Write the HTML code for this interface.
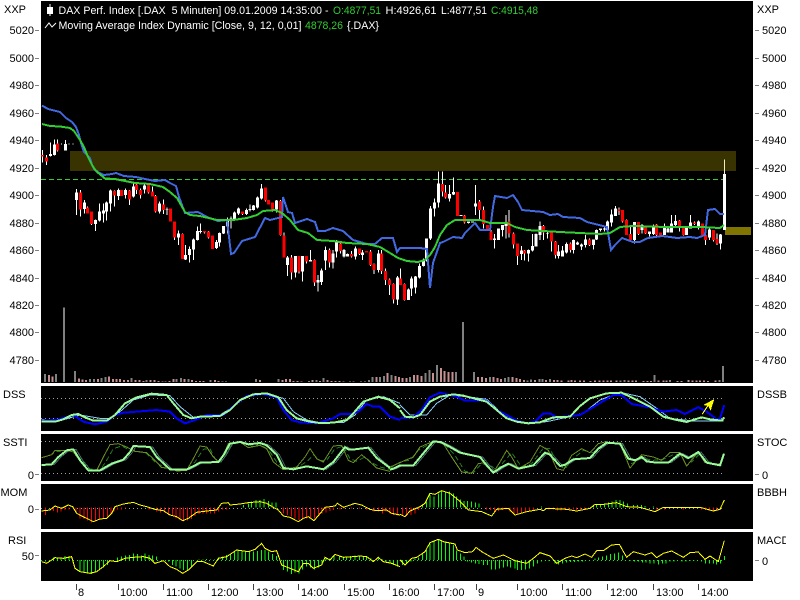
<!DOCTYPE html>
<html lang="en">
<head>
<meta charset="utf-8">
<title>DAX Chart</title>
<style>
html,body{margin:0;padding:0;background:#fff;width:800px;height:600px;overflow:hidden}
svg{display:block;font-family:"Liberation Sans",sans-serif;font-size:11px}
</style>
</head>
<body>
<svg width="800" height="600" viewBox="0 0 800 600" fill="none" shape-rendering="crispEdges">
<rect x="0" y="0" width="800" height="600" fill="#fff"/>
<!-- panes -->
<rect x="41" y="1" width="712" height="382" fill="#000"/>
<rect x="41" y="386" width="712" height="45" fill="#000"/>
<rect x="41" y="434" width="712" height="47" fill="#000"/>
<rect x="41" y="484" width="712" height="45" fill="#000"/>
<rect x="41" y="532" width="712" height="49" fill="#000"/>

<!-- zones -->
<rect x="70" y="151" width="666" height="20" fill="#383300"/>
<rect x="725" y="227" width="26" height="8" fill="#7f7500"/>
<path d="M41 179.5H724" stroke="#32cd32" stroke-dasharray="5 3"/>

<!-- candles: first group -->
<g transform="matrix(.33333 0 0 .33333 0 0)" stroke-width="3">
<path stroke="#fff" d="M128 450V488M139 465V495M151 428V470M163 418V467M172 418V455M184 430V433M196 420V452M205 432h3M218 432h3"/>
<path stroke="#fff" stroke-width="9" d="M151 462V468M163 433V465M196 432V452"/>
<path stroke="#f00" stroke-width="9" d="M128 465V470M139 472V485M172 430V452"/>
</g>
<!-- candles: left -->
<g transform="matrix(.33333 0 0 .33333 0 170)" stroke-width="3">
<path stroke="#fff" d="M229 57V135M241 60V140M253 90V130M263 110V130M274 125V165M286 148V183M298 100V155M310 100V157M320 95V152M332 58V125M344 62V110M355 55V90M365 60V78M376 55V85M388 60V105M400 35V83M410 42V72M422 55V85M433 40V70M445 43V70M458 50V80M466 75V128M478 95V130M490 88V132M501 112V135M512 115V155M524 155V210M536 182V225M547 190V265M557 225V270M568 230V278M580 205V270M592 170V212M602 160V190M614 183V190M625 183V205M637 197V237M649 210V237M659 187V230M670 168V192M682 143V190M693 140V175M704 125V150M715 112V135M728 124V135M739 115V135M750 103V125M761 105V122M773 80V115M785 42V88M796 52V95M806 90V103M818 97V125M830 90V128M841 90V197M852 187V263M863 258V318M875 255V328M886 258V322M897 258V310M907 258V335M920 258V280M932 240V275M943 268V348M954 315V365M965 295V345M976 230V300M988 235V292M999 240V295M1010 210V262M1021 215V250M1032 237V262M1043 250V260M1055 243V262M1066 230V268M1078 235V255M1088 240V270M1100 243V248M1111 240V288M1122 280V312M1135 240V307M1145 240V312M1157 295V345M1168 325V375M1180 340V400M1192 318V405"/>
<path stroke="#fff" stroke-width="9" d="M229 68V90M253 97V117M286 150V162M298 125V152M310 122V130M320 98V125M332 62V100M355 60V78M376 60V75M400 50V80M433 47V58M478 100V125M501 117V119M536 190V203M557 255V268M568 237V255M580 208V238M592 183V210M602 183V186M649 216V234M659 189V218M670 168V190M682 147V170M693 145V150M704 127V148M715 115V130M739 120V132M750 117V120M761 107V120M773 82V113M785 55V85M830 92V118M863 262V285M886 258V307M907 258V305M932 270V274M954 330V338M965 302V336M976 240V272M999 250V278M1010 215V245M1032 240V260M1043 252V260M1066 235V260M1088 247V255M1135 250V300M1192 322V388"/>
<path stroke="#f00" stroke-width="9" d="M241 68V118M263 113V130M274 125V162M344 63V77M365 60V78M388 62V88M410 43V60M422 60V75M445 45V68M458 65V80M466 78V125M490 103V120M512 116V155M524 155V203M547 192V267M614 183V187M625 185V202M637 197V237M728 124V132M796 53V92M806 90V103M818 98V118M841 93V195M852 197V263M875 263V308M897 258V305M920 258V275M943 270V338M988 240V278M1021 220V243M1055 252V260M1078 235V252M1100 243V248M1111 245V285M1122 282V300M1145 250V303M1157 303V330M1168 328V345M1180 342V388"/>
</g>
<!-- candles: right -->
<g transform="matrix(.33333 0 0 .33333 400 130)" stroke-width="3">
<path stroke="#fff" d="M2 415V465M13 460V512M25 475V510M34 440V498M46 438V490M58 400V445M70 385V410M80 325V395M91 228V330M103 205V260M115 125V232M127 125V200M137 165V205M149 165V215M160 143V195M172 186V258M183 255V258M194 255V280M206 275V280M218 275V278M226 165V255M238 210V268M250 230V295M262 285V300M273 300V330M284 312V355M295 295V330M307 285V320M318 255V325M327 240V322M340 308V355M352 340V405M364 348V390M374 360V392M386 358V395M397 312V365M408 310V350M420 275V330M431 285V330M443 305V325M455 305V365M466 333V385M475 345V385M487 348V380M499 338V370M511 338V368M521 328V370M533 335V345M545 340V360M556 315V352M568 325V348M580 328V358M590 298V330M602 295V305M613 293V305M622 272V300M634 238V290M646 228V258M657 232V255M668 240V278M679 268V315M691 288V330M703 276V340M715 276V315M726 282V310M737 290V312M748 305V320M760 283V315M770 282V320M782 308V320M793 280V315M804 292V308M815 255V308M827 255V290M839 270V305M850 293V316M860 293V315M872 255V295M884 275V285M895 272V298M907 280V320M917 305V345M928 295V330M940 300V335M951 310V345M961 312V358"/>
<path stroke="#f0eebb" d="M973 88V132"/>
<path stroke="#fff" stroke-width="9" d="M25 478V510M34 445V475M46 440V472M58 408V443M70 390V408M80 325V385M91 235V325M103 217V235M115 160V218M149 192V205M160 186V194M183 255V258M206 275V279M218 275V278M226 220V230M284 326V330M295 296V330M307 285V300M318 280V288M364 362V372M386 360V370M397 348V362M408 312V350M420 288V315M443 310V312M475 365V378M487 362V380M499 342V368M521 330V360M533 338V343M545 343V350M556 328V345M580 328V345M590 300V328M602 296V300M613 296V298M622 275V300M634 254V278M646 235V258M703 276V330M726 285V300M748 305V312M760 288V312M793 293V315M804 295V308M815 280V308M827 273V285M860 292V315M872 277V295M895 275V290M928 298V322M961 313V340M973 132V300"/>
<path stroke="#f00" stroke-width="9" d="M2 445V465M13 462V510M127 162V185M137 188V203M172 186V258M194 256V278M238 215V240M250 240V282M262 285V300M273 305V330M327 275V310M340 310V343M352 340V378M374 362V370M431 288V308M455 308V335M466 335V375M511 340V360M568 328V345M657 238V243M668 240V275M679 270V315M691 312V330M715 276V312M737 292V310M770 283V315M782 308V320M839 272V293M850 293V315M884 277V282M907 280V315M917 315V330M940 300V330M951 327V340"/>
</g>

<!-- volume -->
<g transform="matrix(.33333 0 0 .33333 0 300)" stroke-width="6">
<path stroke="#808080" d="M135 246V222M168 246V222M192 246V22M225 246V213M270 246V237M282 246V237M305 246V234M316 246V231M395 246V234M440 246V240M530 246V237M543 246V234M565 246V237M632 246V240M768 246V237M835 246V237M927 246V243M950 246V240M970 246V234M1107 246V240M1118 246V231M1140 246V231M1152 246V228M1175 246V225"/>
<path stroke="#c49090" d="M147 246V225M158 246V229M237 246V235M248 246V238M258 246V240M294 246V237M327 246V230M339 246V237M350 246V237M360 246V237M372 246V240M384 246V240M407 246V240M418 246V240M430 246V243M452 246V240M463 246V240M475 246V243M487 246V244M497 246V244M508 246V243M520 246V237M553 246V237M576 246V240M588 246V243M600 246V243M610 246V243M645 246V240M655 246V243M667 246V244M678 246V244M780 246V240M847 246V240M858 246V237M870 246V237M880 246V243M892 246V243M904 246V244M938 246V240M960 246V243M983 246V240M995 246V243M1007 246V243M1018 246V243M1030 246V244M1050 246V244M1060 246V244M1083 246V244M1095 246V244M1130 246V231M1163 246V219M1187 246V228M1197 246V231"/>
</g>
<g transform="matrix(.33333 0 0 .33333 400 300)" stroke-width="6">
<path stroke="#808080" d="M30 246V231M77 246V219M88 246V210M111 246V195M168 246V216M189 246V66M222 246V216M270 246V231M315 246V234M326 246V231M383 246V241M393 246V238M418 246V237M428 246V237M450 246V237M662 246V241M673 246V240M764 246V225M810 246V240M958 246V240M969 246V198"/>
<path stroke="#c49090" d="M8 246V234M20 246V234M42 246V225M53 246V225M65 246V228M99 246V219M123 246V204M133 246V213M145 246V216M157 246V216M234 246V231M246 246V231M258 246V234M280 246V231M292 246V234M303 246V237M338 246V231M349 246V234M360 246V237M372 246V240M405 246V240M438 246V240M462 246V240M472 246V240M485 246V241M505 246V241M515 246V240M525 246V241M540 246V241M552 246V241M572 246V243M585 246V242M598 246V242M610 246V242M622 246V242M633 246V242M650 246V242M685 246V241M697 246V242M708 246V242M730 246V243M742 246V243M753 246V243M776 246V241M790 246V241M800 246V241M833 246V243M845 246V243M866 246V240M878 246V241M890 246V242M900 246V242M912 246V242M924 246V243M947 246V242"/>
</g>

<!-- Moving average lines -->
<polyline stroke="#4169e1" stroke-width="2" points="42,105.5 48,109 54,110.5 60,112 62,114 66,118 72,122 76,127 79,135 81,143 84,152 87,155 90,158 92,165 94,169 98,172 104,175 112,174 116,173 124,176 136,177 145,179 155,181 165,180 170,183 176,186 179,197 185,213 198,212 207,217 218,221 227,220 231,254 234,253 242,241 255,237 265,218 270,220 282,217 283,197 288,212 292,213 295,223 307,219 315,222 318,231 325,231 333,228 343,231 353,240 367,244 375,244 382,238 393,238 397,252 400,248 420,248 427,249 430,288 433,263 440,243 443,242 453,237 462,238 465,233 475,223 480,230 490,230 493,207 495,196 507,198 513,195 518,202 522,210 543,212 550,215 558,214 563,217 580,218 587,222 607,227 611,250 615,245 622,238 633,242 640,242 648,238 662,236 670,237 677,238 690,237 697,238 705,235 708,210 715,209 720,214 724,214"/>
<polyline stroke="#32cd32" stroke-width="2" points="42,124 50,126 60,126.5 70,128 74,131 80,140 84,147 88,157 92,165 96,171 105,178.5 115,179 125,181 135,183 150,184 163,187 170,192 177,198 185,212 190,215 200,216 217,220 233,220 247,218 257,215 263,211 275,210 282,213 290,220 298,230 308,233 317,240 333,241 347,243 367,244 380,247 390,253 398,258 407,261 418,262 425,260 430,255 435,247 440,235 447,225 455,220 467,220 480,220 490,223 507,223 515,227 527,230 543,231 560,232 580,233 600,234 610,233 620,227 633,226 667,227 700,227 720,228 724,225"/>

<!-- dotted lines -->
<g stroke="#a0a0a0" stroke-dasharray="1 3">
<path d="M41 398.5H724M41 418.5H724M41 441.5H724M41 473.5H724M41 508.5H724"/>
</g>
<path stroke="#00ff00" stroke-dasharray="1 3" d="M41 560.5H724"/>

<!-- DSS -->
<g transform="matrix(.33333 0 0 .33333 0 300)" stroke-width="3">
<polyline stroke="#87cefa" points="125,358 170,365 215,352 240,345 300,355 330,355 360,335 400,300 450,285 510,287 540,320 580,352 660,345 700,320 740,290 800,282 850,295 880,335 920,360 960,368 1030,368 1065,345 1100,300 1150,290 1200,310"/>
<polyline stroke="#0000ff" stroke-width="6" points="125,362 170,360 220,345 250,365 285,373 320,365 345,345 370,338 410,335 470,330 510,335 530,355 555,370 585,360 620,345 670,345 710,310 740,288 790,282 830,292 850,330 875,360 900,367 950,370 1000,355 1020,342 1055,342 1075,335 1100,312 1120,320 1140,320 1170,350 1200,360"/>
<polyline stroke="#98fb98" stroke-width="6" points="125,365 165,365 190,358 215,345 235,342 250,350 280,362 320,362 345,345 375,310 410,292 455,281 500,285 520,310 550,345 575,355 600,350 660,348 690,330 720,300 760,283 800,280 835,292 860,330 890,355 930,365 960,369 1000,368 1040,360 1060,340 1090,305 1135,290 1170,300 1200,325"/>
</g>
<g transform="matrix(.33333 0 0 .33333 400 300)" stroke-width="3">
<polyline stroke="#87cefa" points="0,315 30,345 80,345 110,310 150,285 200,290 260,298 300,335 340,360 380,370 440,365 500,352 550,340 600,300 660,277 720,290 770,325 810,355 880,363 970,363"/>
<polyline stroke="#0000ff" stroke-width="6" points="0,355 40,352 65,330 90,292 120,278 170,290 195,302 260,302 290,330 320,345 350,362 380,370 405,365 430,340 450,340 470,352 540,345 590,315 640,285 665,285 695,312 750,322 790,335 830,330 855,342 895,322 920,335 950,358 960,355 973,315"/>
<polyline stroke="#98fb98" stroke-width="6" points="0,330 15,350 40,352 60,345 90,305 120,290 160,283 190,287 260,305 290,330 320,355 350,365 385,370 420,367 460,352 510,350 540,318 570,295 620,280 665,278 700,295 750,320 790,350 830,360 860,366 885,358 905,352 930,358 965,362 973,352"/>
<path stroke="#ffff00" d="M907 342L925 315"/>
<path fill="#ffff00" d="M910 315L943 297L932 332L925 318Z"/>
</g>

<!-- SSTI -->
<g transform="matrix(.33333 0 0 .33333 40 432)" stroke-width="3">
<polyline stroke="#4a6a6a" points="13,99 43,97 63,75 88,55 108,52 128,85 153,115 188,115 223,95 258,83 278,60 288,42 338,45 358,75 398,112 448,113 488,92 543,90 558,70 578,35 608,30 633,37 668,33 688,40 718,68 738,108 768,112 808,103 838,108 858,112 888,90 923,45 933,52 953,52 993,47 1018,78 1050,105"/>
<polyline stroke="#1f7a1f" stroke-dasharray="15 9" points="5,77 35,68 45,60 80,55 100,55 130,92 145,110 180,115 200,85 220,50 245,42 265,52 295,58 320,65 345,90 375,107 400,112 440,115 465,90 490,52 510,50 525,80 540,90 560,60 575,35 610,32 635,42 665,38 690,60 710,90 735,110 775,105 805,85 820,68 840,85 860,85 885,50 910,42 930,80 950,88 975,75 995,92 1020,105 1050,112"/>
<polyline stroke="#6b8e23" points="5,77 35,68 45,55 80,55 100,60 130,100 145,115 170,115 190,75 210,38 235,35 260,45 285,58 320,62 345,85 365,107 390,108 410,117 440,115 460,80 480,42 500,45 520,75 535,90 550,70 565,35 600,30 625,47 660,40 680,50 700,90 730,113 770,105 795,75 810,50 830,80 850,90 880,42 905,40 925,85 940,92 965,68 985,85 1010,108 1050,118"/>
<polyline stroke="#98fb98" stroke-width="6" points="5,99 35,97 55,75 80,55 100,52 120,85 145,115 180,115 215,95 250,83 270,60 280,42 330,45 350,75 390,112 440,113 480,92 535,90 550,70 570,35 600,30 625,37 660,33 680,40 710,68 730,108 760,112 800,103 830,108 850,112 880,90 915,45 925,52 945,52 985,47 1010,78 1050,108"/>
</g>
<g transform="matrix(.33333 0 0 .33333 390 432)" stroke-width="3">
<polyline stroke="#4a6a6a" points="8,113 23,108 38,100 78,100 103,70 138,28 158,30 183,42 218,62 278,75 298,100 318,122 343,105 363,95 393,110 438,100 473,62 488,68 518,102 533,98 558,82 608,78 633,50 658,32 698,35 723,80 743,85 763,75 778,88 808,92 843,92 878,65 903,78 933,60 958,92 995,100"/>
<polyline stroke="#1f7a1f" stroke-dasharray="15 9" points="0,108 35,88 60,85 85,55 125,32 160,32 195,70 225,118 250,122 270,100 295,95 320,115 345,85 365,62 395,105 425,95 460,48 480,50 505,100 525,110 550,80 580,55 610,62 635,38 660,32 695,38 725,95 755,78 790,85 820,82 850,68 875,68 905,90 930,65 950,88 990,98"/>
<polyline stroke="#6b8e23" points="0,105 30,92 45,85 70,75 90,45 130,28 160,35 185,75 215,120 245,124 265,95 285,92 310,122 330,90 350,55 365,75 385,110 420,90 450,40 475,55 500,110 520,115 545,70 575,50 600,62 625,35 645,30 690,35 720,108 755,68 790,75 815,85 840,62 870,62 890,102 925,60 945,92 990,97 1002,65"/>
<polyline stroke="#98fb98" stroke-width="6" points="0,113 15,108 30,100 70,100 95,70 130,28 150,30 175,42 210,62 270,75 290,100 310,122 335,105 355,95 385,110 430,100 465,62 480,68 510,102 525,98 550,82 600,78 625,50 650,32 690,35 715,80 735,85 755,75 770,88 800,92 835,92 870,65 895,78 925,60 950,92 990,100 1002,65"/>
</g>

<!-- MOM bars & line -->
<g transform="matrix(.33333 0 0 .33333 0 450)" stroke-width="3">
<path stroke="#f00" d="M137 172V195M160 172V183M172 172V187M183 172V185M195 172V180M207 172V178M228 172V187M240 172V205M252 172V207M262 172V212M274 172V218M286 172V214M298 172V208M310 172V205M322 172V200M333 172V190M342 172V185M352 172V178M365 172V178M377 172V175M447 172V178M470 172V185M482 172V187M493 172V188M505 172V195M517 172V198M528 172V205M540 172V210M550 172V215M562 172V212M574 172V207M585 172V198M597 172V192M609 172V190M620 172V190M632 172V190M643 172V190M655 172V185M668 172V178M680 172V178M850 172V190M862 172V195M874 172V200M885 172V205M897 172V210M908 172V205M920 172V205M931 172V205M943 172V205M955 172V195M966 172V190M978 172V187M990 172V183M1000 172V180M1020 172V178M1032 172V175M1055 172V175M1078 172V175M1100 172V178M1122 172V185M1135 172V185M1147 172V190M1158 172V185M1170 172V190M1180 172V195M1192 172V197"/>
<path stroke="#00ff00" d="M730 172V165M745 172V160M755 172V155M768 172V150M780 172V150M792 172V147M805 172V153M816 172V157M828 172V157"/>
<polyline stroke="#ffff00" points="125,183 150,180 165,168 185,175 205,165 218,170 230,190 245,198 260,205 280,215 300,207 320,205 335,190 345,170 370,162 400,157 420,165 440,170 465,178 490,182 510,195 530,200 548,212 565,205 590,187 620,183 650,180 665,160 685,158 690,165 720,162 745,158 780,155 800,160 820,172 835,180 850,198 870,202 895,215 910,205 925,200 942,212 965,185 975,172 1005,168 1012,160 1030,172 1065,160 1085,165 1110,178 1130,182 1160,180 1175,190 1200,195"/>
<!-- RSI -->
<path stroke="#00ff00" d="M137 330V335M160 330V322M172 330V322M183 330V322M195 330V318M207 330V318M240 330V365M252 330V367M262 330V370M274 330V372M286 330V365M298 330V358M310 330V352M322 330V345M352 330V323M365 330V320M377 330V317M388 330V315M400 330V310M412 330V312M424 330V316M435 330V310M447 330V315M458 330V316M470 330V320M505 330V335M517 330V345M528 330V350M540 330V355M550 330V360M562 330V360M574 330V350M597 330V328M609 330V328M620 330V327M632 330V328M643 330V328M655 330V322M668 330V320M680 330V315M692 330V312M703 330V305M714 330V300M726 330V303M737 330V305M749 330V305M760 330V305M772 330V303M784 330V300M795 330V300M806 330V305M818 330V312M830 330V318M850 330V360M862 330V365M874 330V372M885 330V368M897 330V370M908 330V358M920 330V350M931 330V352M943 330V358M955 330V352M966 330V340M978 330V325M990 330V325M1002 330V318M1018 330V320M1030 330V320M1040 330V320M1052 330V318M1065 330V316M1078 330V320M1090 330V318M1100 330V320M1113 330V325M1135 330V325M1147 330V328M1158 330V335M1170 330V340M1180 330V345M1192 330V350"/>
<polyline stroke="#ffff00" points="125,335 140,340 165,323 190,325 215,320 225,355 240,365 270,370 290,365 310,350 330,332 350,335 375,325 400,322 430,320 450,325 465,340 490,332 510,350 530,358 548,370 565,360 590,335 610,335 640,348 655,325 680,320 710,300 745,305 765,298 785,280 795,295 815,305 830,302 845,345 870,355 895,365 910,340 925,340 940,355 965,345 975,322 990,330 1005,313 1030,322 1060,320 1080,318 1100,320 1120,335 1135,322 1150,335 1175,340 1200,350"/>
</g>
<g transform="matrix(.33333 0 0 .33333 400 450)" stroke-width="3">
<path stroke="#f00" d="M8 172V197M20 172V198M33 172V195M45 172V190M55 172V180M260 172V178M272 172V180M284 172V185M295 172V183M307 172V180M318 172V178M330 172V185M342 172V190M353 172V190M365 172V188M377 172V185M388 172V185M400 172V180M447 172V178M460 172V178M472 172V182M483 172V182M495 172V180M507 172V178M520 172V178M530 172V180M542 172V178M553 172V178M565 172V175M770 172V178M793 172V178M850 172V178M905 172V178M917 172V180M928 172V180M940 172V182M950 172V182M962 172V178"/>
<path stroke="#00ff00" d="M67 172V165M79 172V155M90 172V135M102 172V140M115 172V130M125 172V123M137 172V125M148 172V125M160 172V130M170 172V140M182 172V148M192 172V153M203 172V153M215 172V155M227 172V157M237 172V160M425 172V170M580 172V165M590 172V165M601 172V165M613 172V162M625 172V158M636 172V155M648 172V150M660 172V150M670 172V155M682 172V160M700 172V165M712 172V165M724 172V165M735 172V168M760 172V170"/>
<polyline stroke="#ffff00" points="0,193 15,200 30,183 60,170 75,160 90,130 105,133 125,122 150,130 175,150 205,180 245,185 275,198 290,178 325,175 345,195 380,185 420,178 430,182 440,175 500,178 530,183 570,175 585,163 610,163 650,158 680,170 720,172 765,185 790,172 850,173 900,172 940,183 960,178 973,150"/>
<!-- RSI -->
<path stroke="#00ff00" d="M8 330V345M20 330V340M33 330V335M45 330V325M55 330V322M67 330V312M79 330V300M90 330V280M102 330V272M115 330V268M125 330V270M137 330V275M148 330V280M160 330V285M170 330V302M182 330V310M192 330V320M203 330V335M215 330V338M227 330V340M237 330V342M250 330V345M262 330V345M275 330V358M287 330V358M298 330V355M310 330V352M322 330V350M332 330V352M345 330V355M353 330V360M365 330V360M377 330V358M388 330V355M400 330V350M412 330V340M425 330V335M447 330V333M465 330V340M476 330V343M488 330V340M500 330V338M512 330V336M524 330V336M536 330V335M547 330V334M585 330V325M596 330V322M607 330V320M620 330V316M632 330V312M644 330V310M656 330V308M668 330V316M692 330V332M703 330V335M715 330V335M727 330V338M738 330V338M750 330V340M762 330V340M775 330V343M787 330V340M798 330V340M810 330V335M822 330V335M833 330V333M846 330V335M858 330V335M870 330V333M882 330V332M893 330V332M905 330V335M917 330V340M928 330V340M940 330V340M950 330V343M962 330V340M973 330V318"/>
<polyline stroke="#ffff00" points="0,330 15,345 35,325 50,322 75,305 90,278 115,268 130,275 165,282 172,300 195,308 218,305 228,292 245,305 280,325 310,315 345,332 380,340 400,325 420,308 450,318 470,340 495,325 515,318 530,323 555,312 575,322 590,302 610,302 635,285 658,283 680,322 700,305 735,315 755,308 770,323 790,310 815,303 850,322 870,308 895,306 915,328 930,318 955,335 973,272"/>
</g>

<!-- ticks -->
<path stroke="#808080" d="M35 30.5h4M35 58.5h4M35 85.5h4M35 113.5h4M35 140.5h4M35 168.5h4M35 195.5h4M35 223.5h4M35 250.5h4M35 278.5h4M35 305.5h4M35 332.5h4M35 360.5h4M35 474.5h4M35 509.5h4M35 555.5h4"/>
<path stroke="#808080" d="M755 30.5h4M755 58.5h4M755 85.5h4M755 113.5h4M755 140.5h4M755 168.5h4M755 195.5h4M755 223.5h4M755 250.5h4M755 278.5h4M755 305.5h4M755 332.5h4M755 360.5h4M755 474.5h4M755 560.5h4"/>
<path stroke="#404040" d="M76.5 584V590M118.5 584V590M163.5 584V590M208.5 584V590M253.5 584V590M298.5 584V590M344.5 584V590M389.5 584V590M434.5 584V590M476.5 584V590M517.5 584V590M562.5 584V590M607.5 584V590M653.5 584V590M698.5 584V590"/>

<!-- title -->
<g shape-rendering="auto">
<path stroke="#fff" d="M50 4V16" shape-rendering="crispEdges"/>
<rect x="47" y="7" width="6" height="7" fill="#fff"/>
<path stroke="#fff" d="M45 28L49 23L52 27L56 23"/>
<g fill="#fff">
<text x="58.5" y="14" textLength="270" lengthAdjust="spacingAndGlyphs" xml:space="preserve">DAX Perf. Index [.DAX  5 Minuten] 09.01.2009 14:35:00 -</text>
<text x="333" y="14" fill="#32cd32" textLength="48" lengthAdjust="spacingAndGlyphs">O:4877,51</text>
<text x="385.5" y="14" textLength="51" lengthAdjust="spacingAndGlyphs">H:4926,61</text>
<text x="441" y="14" textLength="46" lengthAdjust="spacingAndGlyphs">L:4877,51</text>
<text x="491" y="14" fill="#32cd32" textLength="47" lengthAdjust="spacingAndGlyphs">C:4915,48</text>
<text x="58.5" y="29" textLength="243" lengthAdjust="spacingAndGlyphs">Moving Average Index Dynamic [Close, 9, 12, 0,01]</text>
<text x="305" y="29" fill="#32cd32" textLength="38" lengthAdjust="spacingAndGlyphs">4878,26</text>
<text x="347" y="29" textLength="32" lengthAdjust="spacingAndGlyphs">{.DAX}</text>
</g>

<!-- axis labels -->
<g fill="#000" text-anchor="end">
<text x="34" y="34">5020</text><text x="34" y="62">5000</text><text x="34" y="89">4980</text><text x="34" y="117">4960</text><text x="34" y="144">4940</text><text x="34" y="172">4920</text><text x="34" y="199">4900</text><text x="34" y="227">4880</text><text x="34" y="254">4860</text><text x="34" y="282">4840</text><text x="34" y="309">4820</text><text x="34" y="336">4800</text><text x="34" y="364">4780</text>
<text x="34" y="479">0</text><text x="34" y="513">0</text><text x="34" y="560">50</text>
<text x="26" y="13">XXP</text>
</g>
<g fill="#000">
<text x="3" y="398">DSS</text>
<text x="3" y="446">SSTI</text>
<text x="0.5" y="496">MOM</text>
<text x="8" y="544">RSI</text>
<text x="757" y="13">XXP</text>
<text x="762" y="34">5020</text><text x="762" y="62">5000</text><text x="762" y="89">4980</text><text x="762" y="117">4960</text><text x="762" y="144">4940</text><text x="762" y="172">4920</text><text x="762" y="199">4900</text><text x="762" y="227">4880</text><text x="762" y="254">4860</text><text x="762" y="282">4840</text><text x="762" y="309">4820</text><text x="762" y="336">4800</text><text x="762" y="364">4780</text>
<text x="762" y="479">0</text><text x="762" y="565">0</text>
<text x="757" y="398">DSSB</text>
<text x="757" y="446">STOC</text>
<text x="757" y="496">BBBH</text>
<text x="757" y="544">MACD</text>
<text x="78" y="596">8</text><text x="120" y="596">10:00</text><text x="166" y="596">11:00</text><text x="211" y="596">12:00</text><text x="256" y="596">13:00</text><text x="301" y="596">14:00</text><text x="347" y="596">15:00</text><text x="392" y="596">16:00</text><text x="437" y="596">17:00</text><text x="478" y="596">9</text><text x="520" y="596">10:00</text><text x="565" y="596">11:00</text><text x="610" y="596">12:00</text><text x="656" y="596">13:00</text><text x="701" y="596">14:00</text>
</g>
</g>
<rect x="786" y="530" width="14" height="20" fill="#fff"/>
</svg>
</body>
</html>
